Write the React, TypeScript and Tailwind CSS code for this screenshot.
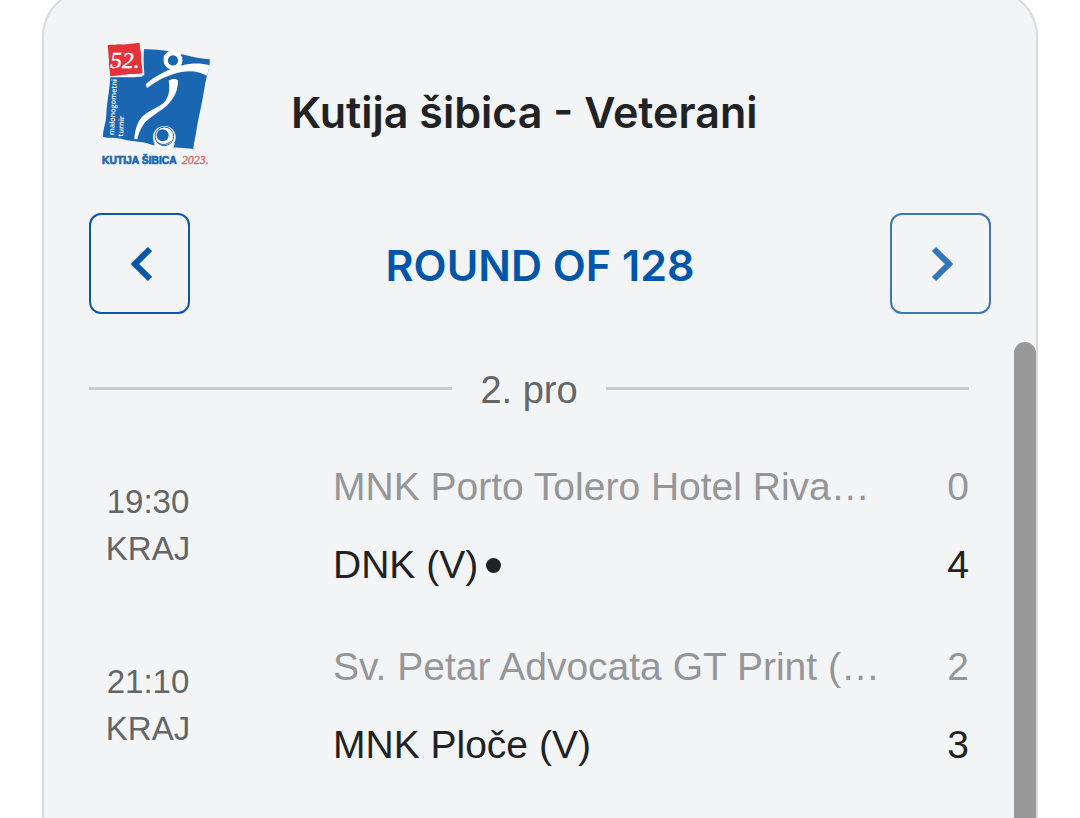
import clsx from 'clsx';

type Side = { name: string; score: number; won?: boolean; marked?: boolean };
type Match = { time: string; status: string; sides: Side[] };

const matches: Match[] = [
  {
    time: '19:30',
    status: 'KRAJ',
    sides: [
      { name: 'MNK Porto Tolero Hotel Riva…', score: 0 },
      { name: 'DNK (V)', score: 4, won: true, marked: true },
    ],
  },
  {
    time: '21:10',
    status: 'KRAJ',
    sides: [
      { name: 'Sv. Petar Advocata GT Print (…', score: 2 },
      { name: 'MNK Ploče (V)', score: 3, won: true },
    ],
  },
];

/* ─── Tournament logo ─── */
function Logo() {
  return (
    <svg viewBox="48 36 330 372" className="h-[124px] w-[110px] shrink-0" role="img" aria-label="Kutija šibica 2023">
      {/* blue box */}
      <path
        fill="#1b66b0"
        d="M177 58 C200 56 220 60 244 62 C290 72 330 84 374 88 C376 110 364 140 360 165 C352 215 344 250 336 290 C332 320 326 340 325 357 C290 352 240 352 200 344 C170 332 140 336 108 326 C88 322 70 326 54 321 C54 295 64 280 64 250 C66 215 74 180 76 138 L172 140 Z"
      />
      {/* red box */}
      <path fill="#f2f4f6" d="M64 40 L172 34 L178 136 L150 142 L72 142 Z" />
      <path fill="#e4343a" d="M68 46 C80 42 90 46 100 43 C124 45 144 40 164 38 C164 56 170 68 168 84 C168 100 174 114 172 130 C150 134 140 130 120 134 C104 133 90 140 75 138 C76 120 70 108 72 92 Z" />
      <text x="76" y="113" fill="#fff" stroke="#fff" strokeWidth="1" fontSize="70" fontStyle="italic" fontFamily="'Liberation Serif', serif">52.</text>

      {/* player */}
      <circle cx="264" cy="91" r="22" fill="none" stroke="#fff" strokeWidth="13" />
      <path fill="none" stroke="#fff" strokeWidth="6" strokeLinecap="round" d="M239 80 C246 64 270 60 286 74" />
      <path
        fill="#fff"
        d="M182 163 C210 138 248 118 292 106 C318 99 346 98 374 106 L366 137 C346 126 322 120 290 126 C250 134 222 148 186 174 Z"
      />
      <path
        fill="#fff"
        d="M251 152 C262 144 276 146 279 152 C278 180 272 196 252 220 C234 242 188 262 174 286 C164 302 160 314 157 328 L148 328 C150 300 156 276 174 258 C196 236 234 232 246 204 C254 188 254 168 251 152 Z"
      />

      {/* ball */}
      <circle cx="238" cy="322" r="34" fill="#fff" />
      <circle cx="238" cy="319" r="28" fill="none" stroke="#1b66b0" strokeWidth="3" />
      <circle cx="233" cy="316" r="18" fill="#1b66b0" />
      <path fill="none" stroke="#1b66b0" strokeWidth="3" d="M217 336 C228 346 246 346 257 334" />
      <path fill="#fff" d="M204 336 C216 352 254 358 270 338 L266 352 L212 350 Z" />

      <g fill="#fff" fontFamily="'Open Sans', sans-serif" fontSize="22" fontWeight="600">
        <text transform="translate(87 316) rotate(-87)">malonogometni</text>
        <text transform="translate(114 320) rotate(-87)">turnir</text>
      </g>
      <text x="51" y="401" fill="#1b66b0" stroke="#1b66b0" strokeWidth="2" fontSize="31" fontWeight="700" fontFamily="'Liberation Sans', sans-serif">
        KUTIJA ŠIBICA
      </text>
      <text x="290" y="401" fill="#d9656a" stroke="#d9656a" strokeWidth="1" fontSize="36" fontStyle="italic" fontFamily="'Liberation Serif', serif">2023.</text>
    </svg>
  );
}

/* ─── Round switch buttons ─── */
function ArrowButton({ direction }: { direction: 'prev' | 'next' }) {
  const prev = direction === 'prev';
  return (
    <button
      type="button"
      aria-label={prev ? 'Previous round' : 'Next round'}
      className={clsx(
        'flex size-[101px] shrink-0 items-center justify-center rounded-xl border-2',
        prev ? 'border-[#0c58a6] text-[#0056a8]' : 'border-[#3d78b2] text-[#3077b9]',
      )}
    >
      <svg width="24" height="36" viewBox="0 0 24 36" fill="none" stroke="currentColor" strokeWidth="6">
        <path d={prev ? 'M22 3 L7 18 L22 33' : 'M5 3 L20 18 L5 33'} />
      </svg>
    </button>
  );
}

function MatchRow({ match }: { match: Match }) {
  return (
    <li className="flex items-center">
      <div className="w-[118px] shrink-0 pb-0.5 text-center text-[33px] leading-[47px] text-[#646566]">
        <div>{match.time}</div>
        <div>{match.status}</div>
      </div>
      <div className="ml-[126px] min-w-0 flex-1 text-[39px] leading-[78px]">
        {match.sides.map((side) => (
          <div
            key={side.name}
            className={clsx('flex items-center justify-between', side.won ? 'text-[#202224]' : 'text-[#949698]')}
          >
            <span className="flex items-center gap-2 whitespace-nowrap">
              {side.name}
              {side.marked && <span className="size-[15px] rounded-full bg-current" />}
            </span>
            <span>{side.score}</span>
          </div>
        ))}
      </div>
    </li>
  );
}

export default function App() {
  return (
    <div className="flex h-screen flex-col overflow-hidden bg-white px-[42px] font-['Liberation_Sans',Arial,sans-serif]">
      <main className="-mt-[10px] flex flex-1 flex-col rounded-t-[46px] border-2 border-b-0 border-[#d9dbdc] bg-[#f2f4f6]">
        <header className="flex items-center gap-20 pt-[50px] pl-[57px]">
          <Logo />
          <h1 className="pt-4 font-[Inter] text-[43px] leading-[56px] font-semibold whitespace-nowrap text-[#202224]">
            Kutija šibica - Veterani
          </h1>
        </header>

        <nav className="mt-[47px] flex items-center justify-between px-[45px]">
          <ArrowButton direction="prev" />
          <h2 className="pt-0.5 font-[Inter] text-[43px] leading-[56px] font-semibold text-[#0056a8]">ROUND OF 128</h2>
          <ArrowButton direction="next" />
        </nav>

        <div className="mt-7 flex flex-1 justify-between">
          <section className="mr-[45px] ml-[45px] min-w-0 flex-1">
            <div className="mt-[22px] flex items-center gap-7 text-[38px] leading-[52px] text-[#646566]">
              <span className="h-[3px] flex-1 bg-[#c9cbcd]" />
              <h3 className="-mb-1">2. pro</h3>
              <span className="h-[3px] flex-1 bg-[#c9cbcd]" />
            </div>
            <ul className="mt-9 flex flex-col gap-6">
              {matches.map((match) => (
                <MatchRow key={match.time} match={match} />
              ))}
            </ul>
          </section>
          {/* scroll thumb */}
          <div className="w-[22px] shrink-0 rounded-t-full bg-[#999]" />
        </div>
      </main>
    </div>
  );
}
